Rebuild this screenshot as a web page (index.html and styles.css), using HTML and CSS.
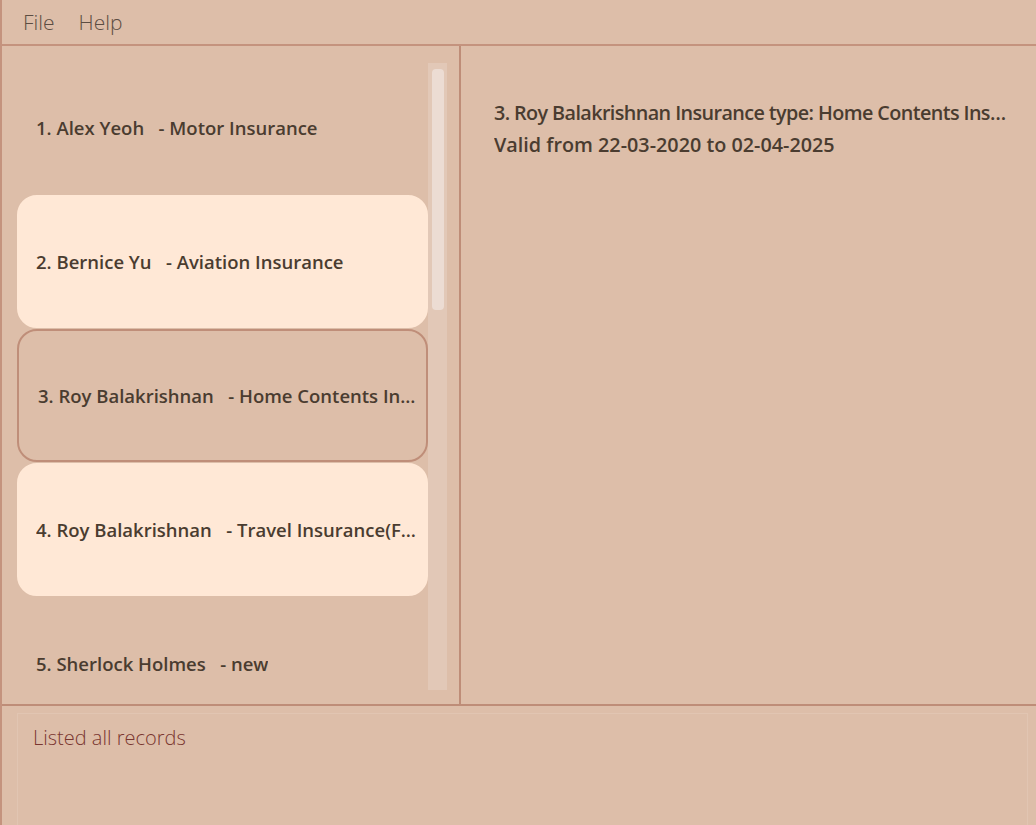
FILE: index.html
```html
<!DOCTYPE html>
<html>
<head>
<meta charset="utf-8">
<link rel="stylesheet" href="styles.css">
</head>
<body>
<div class="app">
  <div class="menubar">
    <span class="menu-item">File</span>
    <span class="menu-item">Help</span>
  </div>
  <div class="main">
    <div class="left">
      <div class="list">
        <div class="cells">
          <div class="cell"><span class="cell-text">1. Alex Yeoh &nbsp;&nbsp;- Motor Insurance</span></div>
          <div class="cell light"><span class="cell-text">2. Bernice Yu &nbsp;&nbsp;- Aviation Insurance</span></div>
          <div class="cell selected"><span class="cell-text">3. Roy Balakrishnan &nbsp;&nbsp;- Home Contents Insurance</span></div>
          <div class="cell light"><span class="cell-text">4. Roy Balakrishnan &nbsp;&nbsp;- Travel Insurance(Family)</span></div>
          <div class="cell"><span class="cell-text">5. Sherlock Holmes &nbsp;&nbsp;- new</span></div>
        </div>
        <div class="scrollbar"><div class="thumb"></div></div>
      </div>
    </div>
    <div class="right">
      <div class="detail-line tight">3. Roy Balakrishnan Insurance type: Home Contents Insurance</div>
      <div class="detail-line">Valid from 22-03-2020 to 02-04-2025</div>
    </div>
  </div>
  <div class="status">
    <div class="status-box">Listed all records</div>
  </div>
</div>
</body>
</html>
```
FILE: styles.css
```css
html, body {
  margin: 0;
  padding: 0;
  background: #ddbea9;
  width: 1036px;
  height: 825px;
  overflow: hidden;
}
.app {
  display: flex;
  flex-direction: column;
  height: 825px;
  border-left: 2px solid #c4937e;
  box-sizing: border-box;
  font-family: "Open Sans", "Noto Sans", sans-serif;
}
.menubar {
  height: 44px;
  border-top: 1px solid #d3ab98;
  border-bottom: 2px solid #c4937e;
  box-sizing: content-box;
  display: flex;
  align-items: center;
  gap: 24px;
  padding-left: 21px;
  margin-top: -1px;
}
.menu-item {
  font-size: 21px;
  font-weight: 300;
  color: #5c4d42;
}
.main {
  display: flex;
  height: 658px;
}
.left {
  width: 457px;
  border-right: 2px solid #be8d78;
  box-sizing: content-box;
  padding-top: 1px;
  height: 657px;
}
.list {
  display: flex;
  height: 644px;
  overflow: hidden;
  padding-left: 15px;
  padding-top: 14px;
  box-sizing: border-box;
}
.cells {
  width: 411px;
  display: flex;
  flex-direction: column;
}
.cell {
  flex: none;
  height: 133px;
  margin-bottom: 1px;
  border-radius: 20px;
  border: 2px solid transparent;
  box-sizing: border-box;
  display: flex;
  align-items: center;
  padding-left: 17px;
  padding-right: 8px;
  font-size: 18.5px;
  font-weight: 600;
  color: #4a3c30;
  white-space: nowrap;
}
.cell-text {
  overflow: hidden;
  text-overflow: ellipsis;
}
.cell.light {
  background: #ffe8d6;
  border-color: #ffe8d6;
}
.cell.selected {
  background: #ddbea9;
  border-color: #bf8e79;
  padding-left: 19px;
}
.scrollbar {
  width: 19px;
  margin-top: 2px;
  height: 627px;
  background: #e2c8b7;
  flex: none;
}
.thumb {
  margin: 6px 3px 0 4px;
  height: 241px;
  border-radius: 4px;
  background: #ecdcd3;
}
.right {
  flex: 1;
  padding: 51px 26px 0 33px;
  overflow: hidden;
}
.detail-line {
  font-size: 19.8px;
  font-weight: 600;
  color: #4a3c30;
  white-space: nowrap;
  overflow: hidden;
  text-overflow: ellipsis;
  line-height: 32px;
}
.detail-line.tight {
  letter-spacing: -0.6px;
}
.status {
  flex: 1;
  border-top: 2px solid #be8d78;
  padding: 7px 8px 0 15px;
}
.status-box {
  height: 112px;
  border: 1px solid #e1c5b2;
  border-bottom: none;
  box-sizing: border-box;
  padding: 10px 15px;
  font-size: 20px;
  font-weight: 300;
  color: #7a3630;
}
```
